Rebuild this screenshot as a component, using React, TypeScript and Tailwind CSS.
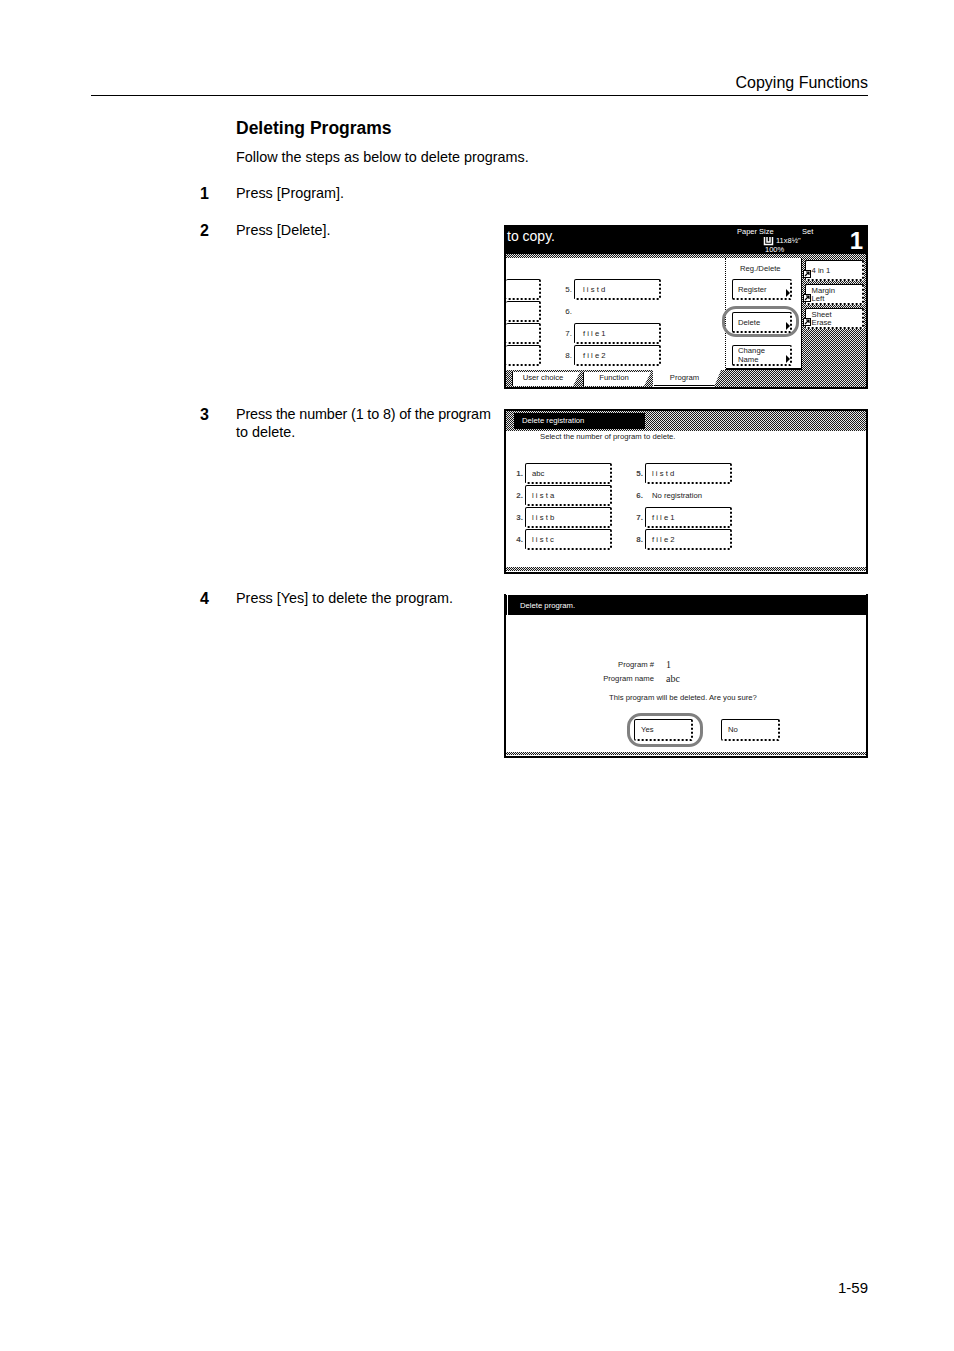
const DITHER = 'bg-[repeating-conic-gradient(#1a1a1a_0_25%,#e8e8e8_0_50%)] bg-[length:2px_2px]'
const KEY =
  'flex items-center bg-white border border-black rounded-[2px] border-r-2 border-b-2 [border-right-style:dotted] [border-bottom-style:dotted]'
const TAB = 'bg-white text-center [clip-path:polygon(0_0,100%_0,calc(100%-7px)_100%,0_100%)]'

const Key = ({ label, className = '', arrow = false }: { label: string; className?: string; arrow?: boolean }) => (
  <div className={`${KEY} relative ${className}`}>
    <span className="leading-[9px] whitespace-pre-line">{label}</span>
    {arrow && <span className="absolute right-0 bottom-[1px] w-0 h-0 border-y-[4px] border-y-transparent border-l-[4px] border-l-black" />}
  </div>
)

const SideKey = ({ label, top }: { label: string; top: string }) => (
  <div className={`${KEY} relative w-[59px] h-[21px] pl-[6px] pt-[2px] ${top}`}>
    <span className="leading-[8px] whitespace-pre-line">{label}</span>
    <svg width="8" height="8" viewBox="0 0 8 8" className="absolute -left-[3px] bottom-[1px]">
      <rect x="0.5" y="0.5" width="7" height="7" fill="#fff" stroke="#000" />
      <path d="M2 6l3.5-3.5M3 2h3v3" fill="none" stroke="#000" strokeWidth="1.2" />
    </svg>
  </div>
)

const Ring = ({ className }: { className: string }) => (
  <span className={`absolute border-[3px] border-[#808080] rounded-[14px] ${className}`} />
)

const CopyScreen = () => (
  <div className="w-[364px] h-[164px] border-2 border-black flex flex-col text-[7.7px] text-[#222] overflow-hidden">
    {/* status bar */}
    <div className="h-[27px] bg-black text-white flex shrink-0">
      <span className="text-[14px] leading-[18px] ml-[1px] w-[230px] shrink-0">to copy.</span>
      <div className="w-[80px] shrink-0 pt-[1px] text-[7.5px]">
        <div className="flex h-[8px] leading-[8px]">
          <span className="w-[65px] shrink-0">Paper Size</span>
          <span>Set</span>
        </div>
        <div className="flex items-center pl-[26px] h-[10px]">
          <svg width="11" height="9" viewBox="0 0 11 9" className="mr-[2px] shrink-0">
            <path d="M1.5 0v7.5h8V0M4 0v5h3V0" fill="none" stroke="#fff" strokeWidth="1.5" />
          </svg>
          <span className="whitespace-nowrap">11x8½"</span>
        </div>
        <div className="pl-[28px] h-[8px] leading-[8px]">100%</div>
      </div>
      <span className="ml-auto mr-[3px] mt-[2px] text-[24px] leading-[24px] font-bold">1</span>
    </div>
    <div className={`h-[4px] shrink-0 ${DITHER}`} />
    <div className="flex h-[112px] shrink-0">
      {/* program list */}
      <div className="w-[217px] bg-white pt-[21px] flex flex-col gap-[1px]">
        {[['5.', 'l i s t  d'], ['6.', ''], ['7.', 'f i l e  1'], ['8.', 'f i l e  2']].map(([num, name]) => (
          <div key={num} className="flex h-[21px] items-center">
            <div className={`${KEY} w-[35px] h-full border-l-0`} />
            <span className="w-[32px] text-right pr-[1px] text-[8px] mr-[1px]">{num}</span>
            {name && <Key label={name} className="w-[87px] h-full pl-[8px] whitespace-pre" />}
          </div>
        ))}
      </div>
      {/* reg / delete */}
      <div className="w-[77px] ml-[2px] bg-white border-x border-b-2 border-black [border-left-style:dotted] flex flex-col items-start pl-[6px]">
        <span className="mt-[6px] ml-[8px] h-[15px] leading-[10px]">Reg./Delete</span>
        <div className="flex flex-col w-[60px]">
          <Key label="Register" arrow className="h-[21px] pl-[5px]" />
          <div className="relative my-[12px]">
            <Key label="Delete" arrow className="h-[21px] pl-[5px]" />
            <Ring className="-left-[10px] -right-[7px] -top-[6px] -bottom-[4px]" />
          </div>
          <Key label={'Change\nName'} arrow className="h-[21px] pl-[5px]" />
        </div>
      </div>
      {/* side keys */}
      <div className={`flex-1 flex flex-col items-center pt-[2px] ${DITHER}`}>
        <SideKey label="4 in 1" top="" />
        <SideKey label={'Margin\nLeft'} top="mt-[3px]" />
        <SideKey label={'Sheet\nErase'} top="mt-[3px]" />
      </div>
    </div>
    {/* tabs */}
    <div className={`flex-1 flex items-stretch pl-[6px] ${DITHER}`}>
      <div className={`w-[68px] mt-[2px] mb-[1px] leading-[11px] pr-[7px] border-l border-black ${TAB}`}>User choice</div>
      <div className={`w-[68px] ml-[3px] mt-[2px] mb-[1px] leading-[11px] pr-[7px] border-l border-black ${TAB}`}>Function</div>
      <div className={`w-[68px] ml-[2px] pr-[6px] pl-[1px] ${TAB}`}>
        <div className="border-b border-black leading-[14px] h-[15px] mt-[1px]">Program</div>
      </div>
    </div>
  </div>
)

const SlotColumn = ({ slots, width }: { slots: [string, string][]; width: string }) => (
  <div className={`flex flex-col gap-[1px] ${width}`}>
    {slots.map(([num, name]) => (
      <div key={num} className="flex h-[21px] items-center">
        <span className="w-[19px] text-[8px] text-right pr-[2px] font-bold text-[#444]">{num}</span>
        {name === 'No registration' ? (
          <span className="ml-[7px]">{name}</span>
        ) : (
          <Key label={name} className="w-[87px] h-full pl-[6px] whitespace-pre" />
        )}
      </div>
    ))}
  </div>
)

const SelectScreen = () => (
  <div className="w-[364px] h-[165px] border-2 border-black flex flex-col text-[7.7px] text-[#222] overflow-hidden">
    <div className={`h-[20px] shrink-0 pt-[2px] pl-[8px] ${DITHER}`}>
      <div className="w-[131px] h-[16px] bg-black text-white leading-[16px] pl-[8px]">Delete registration</div>
    </div>
    <div className="flex-1 bg-white flex flex-col">
      <p className="ml-[34px] mt-[1px] leading-[10px]">Select the number of program to delete.</p>
      <div className="flex mt-[21px]">
        <SlotColumn
          width="w-[120px]"
          slots={[['1.', 'abc'], ['2.', 'l i s t  a'], ['3.', 'l i s t  b'], ['4.', 'l i s t  c']]}
        />
        <SlotColumn
          width="w-[120px]"
          slots={[['5.', 'l i s t  d'], ['6.', 'No registration'], ['7.', 'f i l e  1'], ['8.', 'f i l e  2']]}
        />
      </div>
    </div>
    <div className={`h-[4px] shrink-0 mb-[1px] ${DITHER}`} />
  </div>
)

const ConfirmScreen = () => (
  <div className="w-[364px] h-[164px] border-2 border-black border-t-0 flex flex-col text-[7.7px] text-[#222] overflow-hidden">
    <div className="h-[20px] mt-[1px] bg-black text-white shrink-0 leading-[22px] pl-[14px] flex">
      <span className="w-[1px] h-full bg-white -ml-[13px] mr-[12px]" />
      Delete program.
    </div>
    <div className="flex-1 bg-white flex flex-col">
      <div className="mt-[43px] grid grid-cols-[148px_1fr] w-full leading-[14px]">
        <span className="text-right">Program #</span>
        <span className="ml-[12px] font-['Liberation_Serif',serif] text-[10px]">1</span>
        <span className="text-right">Program name</span>
        <span className="ml-[12px] font-['Liberation_Serif',serif] text-[10px]">abc</span>
      </div>
      <p className="mt-[7px] ml-[103px] leading-[10px]">This program will be deleted. Are you sure?</p>
      <div className="flex gap-[28px] mt-[16px] pl-[128px]">
        <div className="relative">
          <Key label="Yes" className="w-[59px] h-[22px] pl-[6px]" />
          <Ring className="-left-[7px] -right-[10px] -top-[6px] -bottom-[6px]" />
        </div>
        <Key label="No" className="w-[59px] h-[22px] pl-[6px]" />
      </div>
    </div>
    <div className={`h-[3px] shrink-0 mb-[1px] ${DITHER}`} />
  </div>
)

const StepNo = ({ n }: { n: number }) => <span className="block pt-[1px] text-[16px] leading-[18px] font-bold">{n}</span>

export default function App() {
  return (
    <div className="w-[954px] h-[1351px] bg-white text-black flex flex-col font-['Liberation_Sans',Arial,sans-serif] overflow-hidden">
      <header className="h-[96px] ml-[91px] mr-[86px] border-b border-black flex items-end justify-end pb-[4px] shrink-0">
        <span className="text-[16px] leading-[17px]">Copying Functions</span>
      </header>

      <main className="pl-[200px] pr-[86px] text-[14.4px] leading-[18px]">
        <h2 className="ml-[36px] mt-[22px] text-[17.5px] leading-[20px] font-bold">Deleting Programs</h2>
        <p className="ml-[36px] mt-[10px]">Follow the steps as below to delete programs.</p>

        <div className="grid grid-cols-[36px_268px_364px] mt-[18px]">
          <StepNo n={1} />
          <p className="col-span-2">Press [Program].</p>
        </div>

        <div className="grid grid-cols-[36px_268px_364px] mt-[18px]">
          <StepNo n={2} />
          <p>Press [Delete].</p>
          <div className="mt-[4px]"><CopyScreen /></div>
        </div>

        <div className="grid grid-cols-[36px_268px_364px] mt-[20px]">
          <div className="-mt-[4px]"><StepNo n={3} /></div>
          <p className="-mt-[4px]">
            <span className="tracking-[-0.15px]">Press the number (1 to 8) of the program</span> to delete.
          </p>
          <SelectScreen />
        </div>

        <div className="grid grid-cols-[36px_268px_364px] mt-[20px]">
          <div className="-mt-[5px]"><StepNo n={4} /></div>
          <p className="-mt-[5px]">Press [Yes] to delete the program.</p>
          <ConfirmScreen />
        </div>
      </main>

      <footer className="mt-auto mb-[55px] mr-[86px] text-right text-[15px] leading-[17px]">1-59</footer>
    </div>
  )
}
